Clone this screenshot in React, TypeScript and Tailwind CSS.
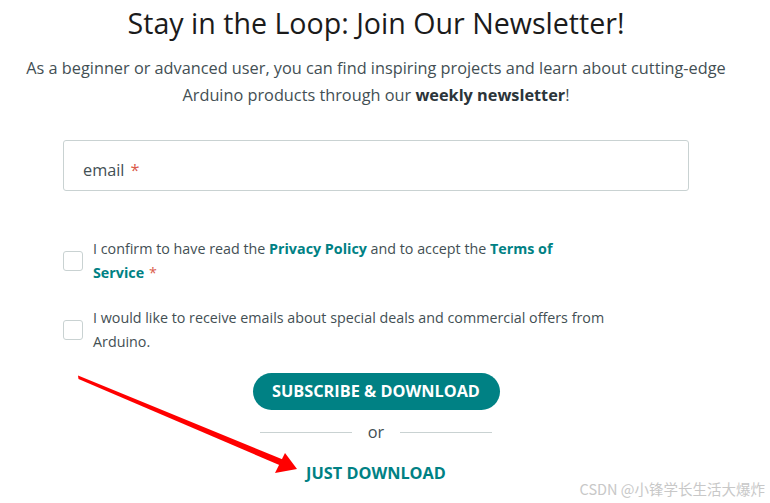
export default function App() {
  return (
    <div className="relative w-[770px] h-[503px] overflow-hidden bg-white font-['Open_Sans',sans-serif] text-[#434f54]">
      <div className="w-[752px]">
        {/* Heading */}
        <h1 className="pt-[4px] text-center text-[28.6px] leading-[38px] text-[#1b1b1b]">
          Stay in the Loop: Join Our Newsletter!
        </h1>
        <p className="mt-[13px] text-center text-[16.3px] leading-[27px]">
          As a beginner or advanced user, you can find inspiring projects and learn about cutting-edge
          <br />
          Arduino products through our <b className="font-bold text-[#2c353a]">weekly newsletter</b>!
        </p>

        {/* Form */}
        <div className="ml-[63px] w-[626px]">
          <div className="mt-[31px] flex h-[51px] items-center rounded-[3px] border border-[#c9d2d2] px-[19px] pt-[9px] text-[16.3px]">
            email <span className="ml-[6px] text-[#da5b4a]">*</span>
          </div>

          <div className="mt-[46px] flex flex-col gap-[21px] text-[14.3px] leading-[24px]">
            <label className="flex items-center gap-[10px]">
              <span className="h-[20px] w-[20px] shrink-0 rounded-[3px] border border-[#c9d2d2]" />
              <span className="w-[490px]">
                I confirm to have read the{" "}
                <a className="font-bold text-[#008184]">Privacy Policy</a> and to accept the{" "}
                <a className="font-bold text-[#008184]">Terms of Service</a>
                <span className="ml-[5px] text-[#da5b4a]">*</span>
              </span>
            </label>
            <label className="flex items-center gap-[10px]">
              <span className="h-[20px] w-[20px] shrink-0 rounded-[3px] border border-[#c9d2d2]" />
              <span className="w-[530px]">
                I would like to receive emails about special deals and commercial offers from Arduino.
              </span>
            </label>
          </div>
        </div>

        {/* Actions */}
        <div className="mt-[19px] flex flex-col items-center">
          <button className="h-[37px] w-[247px] rounded-full bg-[#008184] text-[16.3px] font-bold uppercase text-white">
            Subscribe &amp; Download
          </button>
          <div className="mt-[10px] flex h-[24px] items-center gap-[16px] text-[16.3px] text-[#434f54]">
            <span className="h-px w-[92px] bg-[#c9d2d2]" />
            or
            <span className="h-px w-[92px] bg-[#c9d2d2]" />
          </div>
          <a className="mt-[17px] text-[16.3px] font-bold uppercase leading-[24px] text-[#008184]">
            Just Download
          </a>
        </div>
      </div>

      {/* Annotation arrow */}
      <svg className="absolute left-0 top-0" width="770" height="503">
        <polygon points="78,375.5 78.5,379 284,467 286.5,461" fill="#ff0000" />
        <polygon points="297,469 275,473 285,453" fill="#ff0000" />
      </svg>

      {/* Watermark */}
      <div className="absolute bottom-[3px] right-[5px] font-['Noto_Sans_CJK_SC',sans-serif] text-[14.5px] text-[#c8c8c8]">
        CSDN @小锋学长生活大爆炸
      </div>
    </div>
  );
}
